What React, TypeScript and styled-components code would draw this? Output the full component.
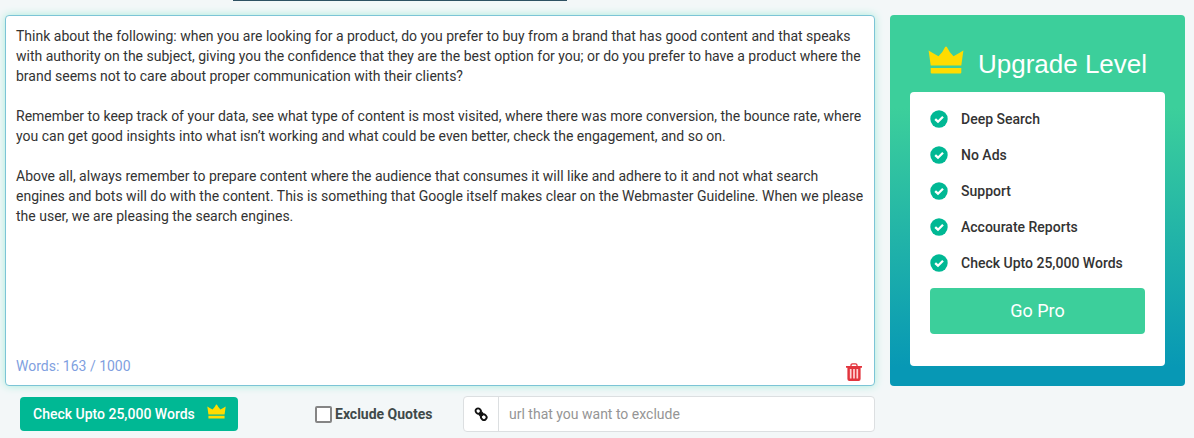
import React, { useState } from "react";
import styled, { createGlobalStyle } from "styled-components";

const GlobalStyle = createGlobalStyle`
  * { box-sizing: border-box; }
  body {
    margin: 0;
    background: #f3f7f8;
    color: #333;
    font: 14px/20px Roboto, sans-serif;
  }
  button, input, textarea { font: inherit; }
`;

const Page = styled.div`
  display: grid;
  grid-template-columns: minmax(0, 1fr) 295px;
  column-gap: 15px;
  padding: 0 9px 6px 5px;
`;

const TopStrip = styled.div`
  grid-column: 1 / -1;
  height: 15px;
`;

const TopBar = styled.div`
  width: 334px;
  height: 1px;
  margin-left: 228px;
  background: #2f5163;
`;

const Editor = styled.section`
  display: flex;
  flex-direction: column;
  min-height: 371px;
  background: #fff;
  border: 1px solid #7cc4d6;
  border-radius: 4px;
  box-shadow: 0 0 8px #a8ecdc;
`;

const EditorText = styled.textarea`
  flex: 1;
  width: 100%;
  padding: 10px;
  border: 0;
  border-radius: 4px;
  outline: 0;
  resize: none;
  overflow: hidden;
  background: transparent;
  color: #333;
`;

const EditorFooter = styled.div`
  display: flex;
  align-items: center;
  justify-content: space-between;
  height: 39px;
  padding: 0 12px 0 10px;
  color: #7f9fe0;
`;

const ClearButton = styled.button`
  display: flex;
  margin-top: 12px;
  padding: 0;
  border: 0;
  background: none;
  cursor: pointer;
`;

const Controls = styled.div`
  grid-column: 1;
  display: flex;
  align-items: center;
  margin-top: 10px;
  padding-left: 15px;
`;

const CheckButton = styled.button`
  display: flex;
  align-items: flex-start;
  justify-content: space-between;
  width: 218px;
  height: 34px;
  padding: 7px 12px 7px 13px;
  border: 0;
  border-radius: 4px;
  background: #00b894;
  color: #fff;
  font-weight: 500;
  cursor: pointer;
`;

const QuoteOption = styled.label`
  display: flex;
  align-items: center;
  gap: 3px;
  width: 148px;
  margin-left: 77px;
  color: #3f4a4a;
  font-weight: 700;
`;

const Checkbox = styled.input`
  appearance: none;
  width: 17px;
  height: 17px;
  margin: 0;
  border: 2px solid #858585;
  border-radius: 2px;
  background: #fff;
  &:checked { background: #00b894; }
`;

const UrlGroup = styled.div`
  display: flex;
  flex: 1;
  height: 36px;
  border: 1px solid #dcdfe1;
  border-radius: 4px;
  background: #fff;
`;

const UrlLabel = styled.label`
  display: flex;
  align-items: center;
  justify-content: center;
  width: 35px;
  border-right: 1px solid #dcdfe1;
`;

const UrlInput = styled.input`
  flex: 1;
  min-width: 0;
  padding: 0 10px;
  border: 0;
  border-radius: 4px;
  outline: 0;
  background: transparent;
  color: #333;
  &::placeholder { color: #959595; opacity: 1; }
`;

const Upgrade = styled.aside`
  display: flex;
  flex-direction: column;
  padding: 30px 20px 20px;
  border-radius: 4px;
  background: linear-gradient(#3ccf9b 0%, #3ccf9b 25%, #0798b5 95%);
`;

const UpgradeHeading = styled.h2`
  display: flex;
  align-items: center;
  justify-content: center;
  gap: 14px;
  height: 36px;
  margin: 0 0 11px;
  color: #fff;
  font: 400 26px/36px "Liberation Sans", Arial, sans-serif;
`;

const HeadingText = styled.span`
  padding-top: 2px;
`;

const HeadingIcon = styled.span`
  display: flex;
  align-self: flex-start;
  padding-top: 1px;
`;

const Plan = styled.div`
  flex: 1;
  padding: 9px 20px 32px;
  border-radius: 4px;
  background: #fff;
`;

const FeatureList = styled.ul`
  margin: 0 0 7px;
  padding: 0;
  list-style: none;
`;

const Feature = styled.li`
  display: flex;
  align-items: center;
  gap: 13px;
  height: 36px;
  font-weight: 500;
`;

const ProButton = styled.button`
  width: 100%;
  height: 46px;
  padding: 0;
  border: 0;
  border-radius: 4px;
  background: #3ccf9b;
  color: #fff;
  font-size: 18px;
  cursor: pointer;
`;

function Crown({ width, height }: { width: number; height: number }) {
  return (
    <svg width={width} height={height} viewBox="0 0 36 28" fill="#ffdc00" aria-hidden="true">
      <path d="M.6 4.6Q5 7.4 10.5 10.2Q14.8 6.2 17 1.2Q18 0 19 1.2Q21.2 6.2 25.5 10.2Q31 7.4 35.4 4.6L33.3 19.5H2.7Z" />
      <path d="M2.7 22h30.6v4.6q0 .8-.8.8h-29q-.8 0-.8-.8z" />
    </svg>
  );
}

function Tick() {
  return (
    <svg width="18" height="18" viewBox="0 0 18 18" fill="none" aria-hidden="true">
      <circle cx="9" cy="9" r="8.7" fill="#00b894" />
      <path d="M5.2 9.1 8 11.7 13 6.7" stroke="#fff" strokeWidth="2.3" />
    </svg>
  );
}

function Trash() {
  return (
    <svg width="16" height="18" viewBox="0 0 16 18" fill="none" aria-hidden="true">
      <path d="M5 3.2V2.3Q5 .8 6.5.8h3Q11 .8 11 2.3v.9" stroke="#e2343d" strokeWidth="1.3" />
      <path d="M0 3h16v1.8h-1.4V16q0 2-2 2H3.4q-2 0-2-2V4.8H0Z" fill="#e2343d" />
      <path d="M4.7 6v9.6M8 6v9.6M11.3 6v9.6" stroke="#ffd3d3" strokeWidth="1.7" />
    </svg>
  );
}

function Chain() {
  return (
    <svg width="14" height="14" viewBox="0 0 14 14" fill="none" stroke="#111" strokeWidth="1.9" aria-hidden="true">
      <rect x="1.5" y="1.5" width="5.4" height="5" rx="2.5" transform="rotate(45 4.2 4)" />
      <rect x="7" y="7.6" width="5.6" height="5.2" rx="2.5" transform="rotate(45 9.8 10.2)" />
      <path d="M5 7.2 6.6 8.8M7.4 5.2 9 6.8M5.6 5.6l3 3" />
    </svg>
  );
}

const features = ["Deep Search", "No Ads", "Support", "Accourate Reports", "Check Upto 25,000 Words"];

const initialText = `Think about the following: when you are looking for a product, do you prefer to buy from a brand that has good content and that speaks with authority on the subject, giving you the confidence that they are the best option for you; or do you prefer to have a product where the brand seems not to care about proper communication with their clients?

Remember to keep track of your data, see what type of content is most visited, where there was more conversion, the bounce rate, where you can get good insights into what isn’t working and what could be even better, check the engagement, and so on.

Above all, always remember to prepare content where the audience that consumes it will like and adhere to it and not what search engines and bots will do with the content. This is something that Google itself makes clear on the Webmaster Guideline. When we please the user, we are pleasing the search engines.`;

export default function App() {
  const [text, setText] = useState(initialText);
  return (
    <>
      <GlobalStyle />
      <Page>
        <TopStrip><TopBar /></TopStrip>
        <Editor>
          <EditorText aria-label="Text to check" spellCheck={false} value={text} onChange={(e) => setText(e.target.value)} />
          <EditorFooter>
            <span>Words: {text ? 163 : 0} / 1000</span>
            <ClearButton type="button" aria-label="Clear text" onClick={() => setText("")}><Trash /></ClearButton>
          </EditorFooter>
        </Editor>
        <Upgrade>
          <UpgradeHeading>
            <HeadingIcon><Crown width={36} height={28} /></HeadingIcon>
            <HeadingText>Upgrade Level</HeadingText>
          </UpgradeHeading>
          <Plan>
            <FeatureList>
              {features.map((name) => <Feature key={name}><Tick />{name}</Feature>)}
            </FeatureList>
            <ProButton type="button">Go Pro</ProButton>
          </Plan>
        </Upgrade>
        <Controls>
          <CheckButton type="button">Check Upto 25,000 Words<Crown width={19} height={15} /></CheckButton>
          <QuoteOption><Checkbox type="checkbox" />Exclude Quotes</QuoteOption>
          <UrlGroup>
            <UrlLabel htmlFor="exclude-url" aria-label="URL to exclude"><Chain /></UrlLabel>
            <UrlInput id="exclude-url" type="text" placeholder="url that you want to exclude" />
          </UrlGroup>
        </Controls>
      </Page>
    </>
  );
}
